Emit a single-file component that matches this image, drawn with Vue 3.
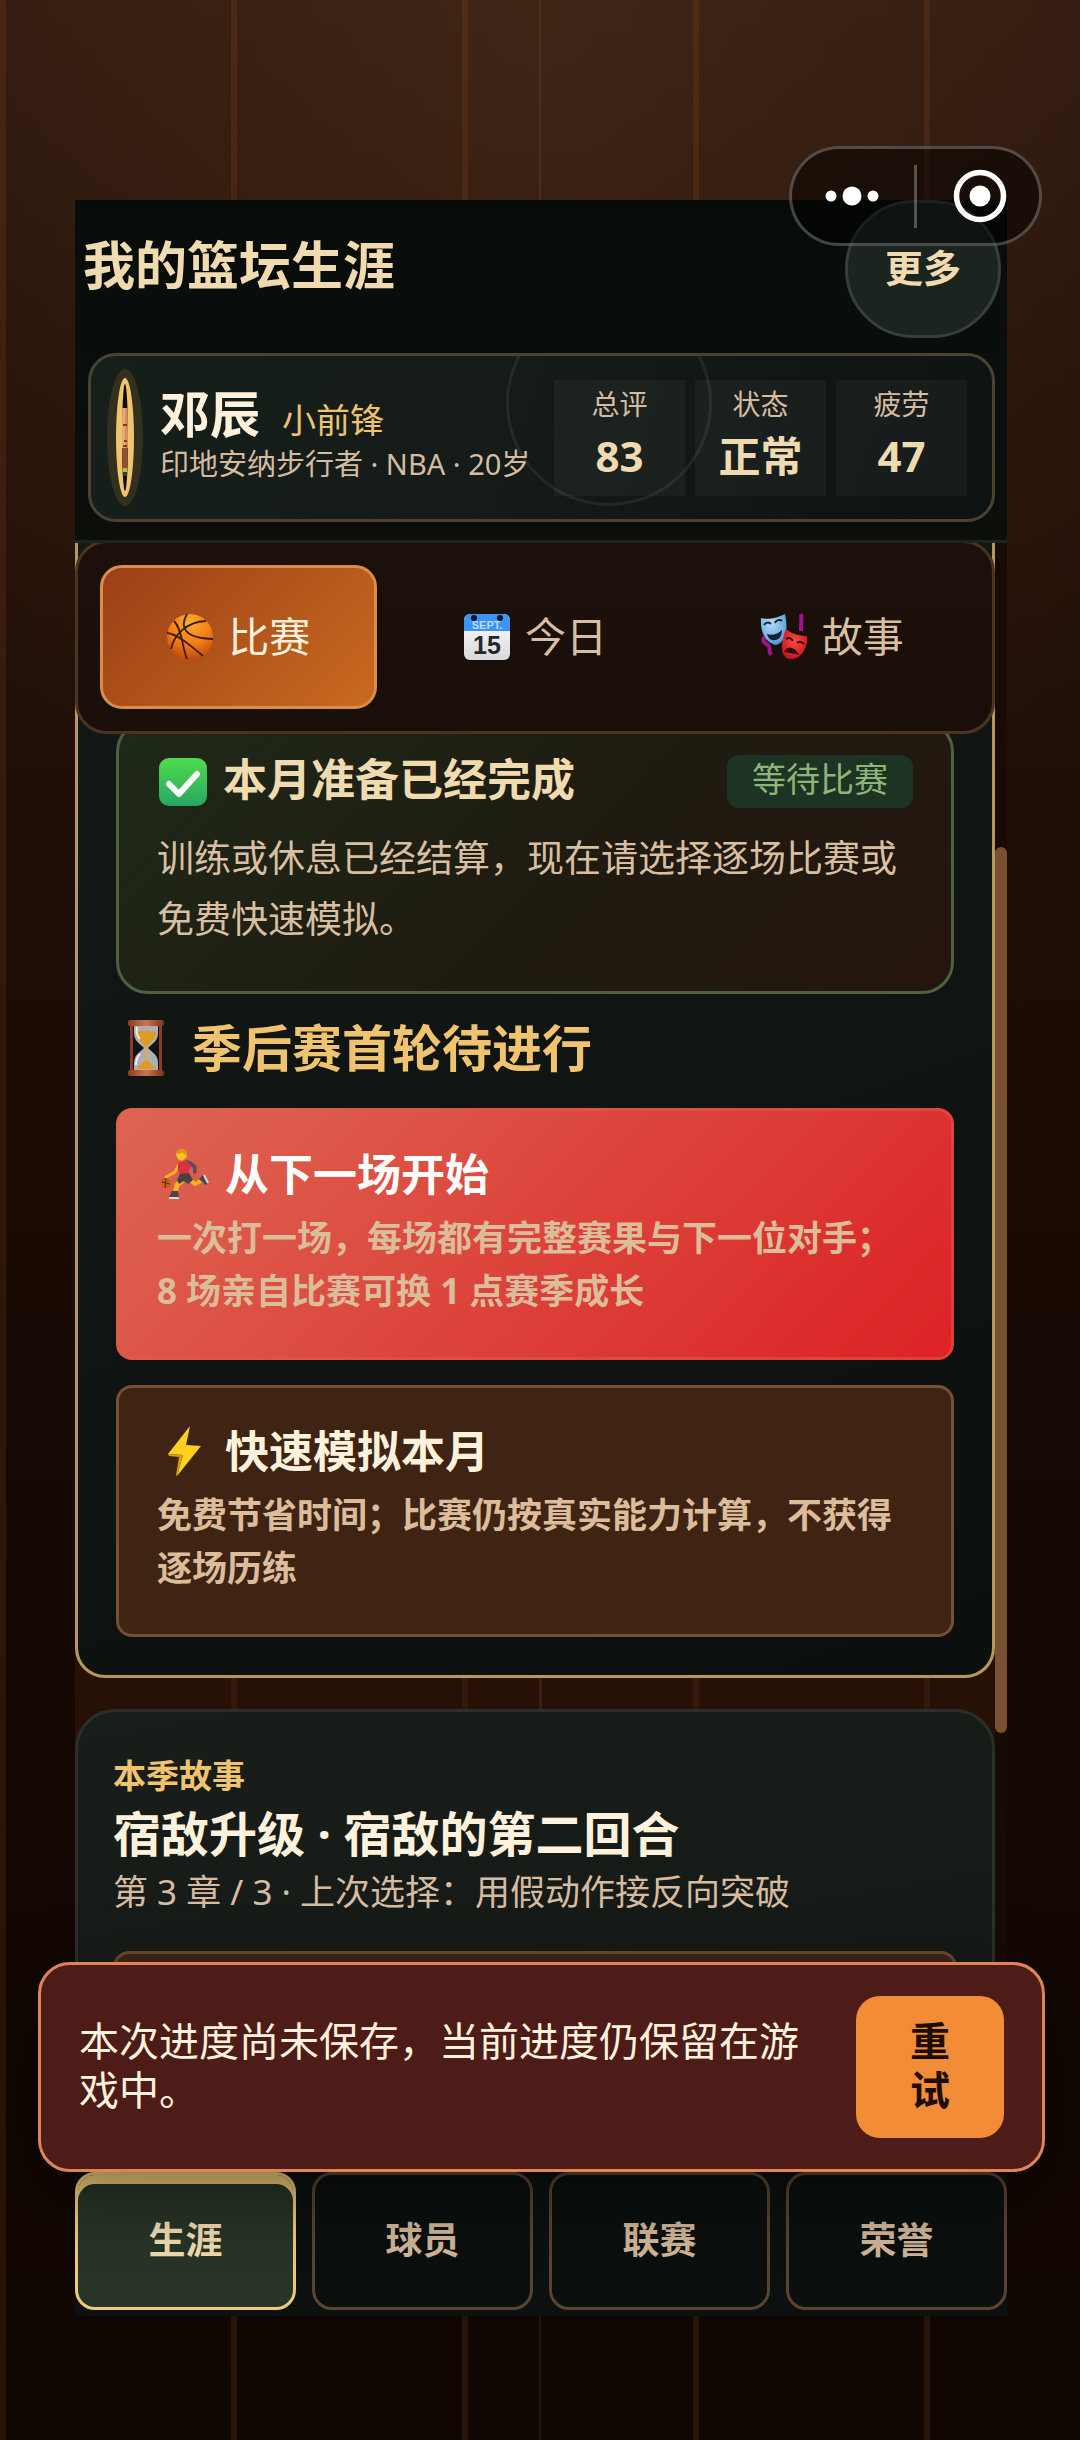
<script setup>
import { ref } from 'vue'

const stats = [
  { label: '总评', value: '83' },
  { label: '状态', value: '正常' },
  { label: '疲劳', value: '47' },
]
const tabs = [
  { id: 'match', label: '比赛' },
  { id: 'today', label: '今日' },
  { id: 'story', label: '故事' },
]
const sections = ['生涯', '球员', '联赛', '荣誉']
const activeTab = ref('match')
const activeSection = ref('生涯')
</script>

<template>
  <div class="page">
    <div class="shell">
      <header class="top">
        <div class="title-row">
          <h1>我的篮坛生涯</h1>
          <button class="more" type="button">更多</button>
        </div>
        <section class="profile">
          <div class="avatar">
            <svg viewBox="0 0 6 107" preserveAspectRatio="none" aria-hidden="true">
              <rect width="6" height="107" fill="#120d0b" />
              <path d="M0 24h6v40H0z" fill="#d98f5c" />
              <path d="M0 24h3v40H0z" fill="#e9a972" />
              <path d="M1 40h4v2H1zM2 56h3v2H2zM1 61h4v2H1z" fill="#7a3d22" />
              <path d="M0 64h6v20H0z" fill="#8d5232" />
              <path d="M1 84h4v4H1z" fill="#d9ab45" />
              <path d="M0 88h6v4H0z" fill="#1d4a2c" />
            </svg>
          </div>
          <div class="who">
            <div class="name-line">
              <h2>邓辰</h2>
              <span class="role">小前锋</span>
            </div>
            <p>印地安纳步行者 · NBA · 20岁</p>
          </div>
          <dl class="stats">
            <div v-for="s in stats" :key="s.label" class="stat">
              <dt>{{ s.label }}</dt>
              <dd>{{ s.value }}</dd>
            </div>
          </dl>
        </section>
      </header>

      <main class="scroller">
        <section class="match-card">
          <nav class="tabs">
            <button
              v-for="t in tabs"
              :key="t.id"
              type="button"
              class="tab"
              :class="{ active: t.id === activeTab }"
              @click="activeTab = t.id"
            >
              <svg v-if="t.id === 'match'" class="emoji" viewBox="0 0 48 48" aria-hidden="true">
                <defs>
                  <radialGradient id="ball" cx=".5" cy=".2" r=".85">
                    <stop offset="0" stop-color="#ffab32" />
                    <stop offset=".55" stop-color="#f07c12" />
                    <stop offset="1" stop-color="#b8420a" />
                  </radialGradient>
                </defs>
                <circle cx="24" cy="24" r="23" fill="url(#ball)" />
                <g fill="none" stroke="#3b1d14" stroke-width="1.8">
                  <path d="M1 20C12 21 26 34 37 43" />
                  <path d="M5 36C8 22 20 9 40 8" />
                  <path d="M8 8c8 8 8 26 13 38" />
                  <path d="M21 1c-8 14-2 24 26 25" />
                </g>
              </svg>
              <svg v-else-if="t.id === 'today'" class="emoji" viewBox="0 0 48 48" aria-hidden="true">
                <defs>
                  <linearGradient id="sheet" x2="0" y2="1">
                    <stop offset="0" stop-color="#ffffff" />
                    <stop offset="1" stop-color="#d9d9dc" />
                  </linearGradient>
                </defs>
                <rect x="1" y="1" width="46" height="46" rx="6" fill="url(#sheet)" />
                <path d="M1 18V7a6 6 0 0 1 6-6h34a6 6 0 0 1 6 6v11z" fill="#3b93f5" />
                <circle cx="11" cy="5" r="3" fill="#10151c" />
                <circle cx="37" cy="5" r="3" fill="#10151c" />
                <text x="24" y="16" text-anchor="middle" class="cal-month">SEPT.</text>
                <text x="24" y="41" text-anchor="middle" class="cal-day">15</text>
              </svg>
              <svg v-else class="emoji" viewBox="0 0 48 48" aria-hidden="true">
                <defs>
                  <radialGradient id="joy" cx=".4" cy=".3" r=".7">
                    <stop offset="0" stop-color="#b5defa" />
                    <stop offset="1" stop-color="#4f9bd6" />
                  </radialGradient>
                  <radialGradient id="sorrow" cx=".5" cy=".4" r=".65">
                    <stop offset="0" stop-color="#ff4b47" />
                    <stop offset="1" stop-color="#bd1119" />
                  </radialGradient>
                </defs>
                <path d="M41 1c1 5 0 9 0 17M5 24c-4 4 0 6 3 8s0 5 3 10" fill="none" stroke="#a3128c" stroke-width="4" />
                <path d="M1 5c8 2 16 0 24-4 3 14 2 28-9 31C5 30 0 18 1 5z" fill="url(#joy)" />
                <path d="M4 12c2-3 5-3 7-1M15 10c1-3 5-4 7-2" fill="none" stroke="#17202c" stroke-width="2" />
                <path d="M7 21c5 2 11 0 15-4 0 6-3 10-7 10-4 1-7-2-8-6z" fill="#17202c" />
                <path d="M26 16c6 5 14 7 21 7 1 12-6 24-17 23-10-1-10-15-4-30z" fill="url(#sorrow)" />
                <path d="M26 26c3-2 5-1 7 2M37 30c2-2 5-1 7 1" fill="none" stroke="#2a0d10" stroke-width="2" />
                <path d="M24 39c2-6 11-6 15 3-5-2-10-2-15-3z" fill="#2a0d10" />
              </svg>
              <span>{{ t.label }}</span>
            </button>
          </nav>

          <article class="status">
            <div class="status-head">
              <svg class="check" viewBox="0 0 48 48" aria-hidden="true">
                <defs>
                  <linearGradient id="tick" x2="0" y2="1">
                    <stop offset="0" stop-color="#4fdc4b" />
                    <stop offset="1" stop-color="#27a663" />
                  </linearGradient>
                </defs>
                <rect width="48" height="48" rx="10" fill="url(#tick)" />
                <path d="M10 26l10 10 18-20" fill="none" stroke="#fff" stroke-width="6" stroke-linecap="round" stroke-linejoin="round" />
              </svg>
              <h3>本月准备已经完成</h3>
              <span class="badge">等待比赛</span>
            </div>
            <p>训练或休息已经结算，现在请选择逐场比赛或免费快速模拟。</p>
          </article>

          <h2 class="round">
            <svg viewBox="0 0 36 56" aria-hidden="true">
              <defs>
                <linearGradient id="wood" x2="1" y2="0">
                  <stop offset="0" stop-color="#8d3d26" />
                  <stop offset=".5" stop-color="#cf7350" />
                  <stop offset="1" stop-color="#7d321e" />
                </linearGradient>
              </defs>
              <path d="M2 5h3v46H2zM31 5h3v46h-3z" fill="#8a3c28" />
              <path d="M6 6h24v7c0 8-6 11-10 15 4 4 10 7 10 15v7H6v-7c0-8 6-11 10-15C12 24 6 21 6 13z" fill="#c9cbcc" opacity=".85" />
              <path d="M8 12q10-3 20 0c0 7-6 10-9 14h-2C14 22 8 19 8 12z" fill="#e09a24" />
              <path d="M17 26h2v16h-2z" fill="#e5a844" />
              <path d="M18 39l10 10H8z" fill="#e09a24" />
              <path d="M9 7c-1 5 0 9 3 12M12 34c-3 3-4 7-4 11" fill="none" stroke="#fff" stroke-width="2" opacity=".8" />
              <rect width="36" height="6" rx="2" fill="url(#wood)" />
              <rect y="50" width="36" height="6" rx="2" fill="url(#wood)" />
            </svg>
            <span>季后赛首轮待进行</span>
          </h2>

          <div class="choices">
            <button class="choice primary" type="button">
              <span class="choice-title">
                <svg viewBox="0 0 48 50" aria-hidden="true">
                  <path d="M17 17l-3 6-9 5" fill="none" stroke="#f5b51d" stroke-width="3" stroke-linecap="round" stroke-linejoin="round" />
                  <path d="M22 31l-6 5-2 8" fill="none" stroke="#f5b51d" stroke-width="5" stroke-linejoin="round" />
                  <path d="M28 30l6 5 6-3" fill="none" stroke="#f5b51d" stroke-width="4" stroke-linejoin="round" />
                  <path d="M24 11c5 0 9 3 12 7l-1 7-3-1v-5l-6-4z" fill="#57505a" />
                  <path d="M17 14l8-3 5 5-3 9-8 1-2-5z" fill="#d83340" />
                  <path d="M19 25l9-1 4 7-5 4-4-3-5 3-2-4z" fill="#4a4148" />
                  <path d="M16 2q5-4 9 0 2 4 0 7l-4 3-4-2-2-4z" fill="#f9c325" />
                  <path d="M16 2q5-4 9 0 1 2 1 5l-4-3-6 1z" fill="#d99a12" />
                  <circle cx="5" cy="34" r="5" fill="#c9601c" />
                  <path d="M1 33l8 2M5 29l-1 10" stroke="#5f260d" stroke-width="1" />
                  <path d="M11 42h6l1 6H8zM38 30l4-4 5 8-2 2z" fill="#4c4650" />
                  <path d="M8 49h10M43 26l4 8" stroke="#ded6de" stroke-width="2" />
                </svg>
                从下一场开始
              </span>
              <span class="choice-desc">一次打一场，每场都有完整赛果与下一位对手；8 场亲自比赛可换 1 点赛季成长</span>
            </button>
            <button class="choice" type="button">
              <span class="choice-title">
                <svg viewBox="0 0 48 50" aria-hidden="true">
                  <path d="M29 0L7 28l15 1-6 21 24-30-15-1z" fill="#ffd21f" />
                  <path d="M7 28l15 1-6 21-1-1 3-18-10-1z" fill="#d99b12" />
                </svg>
                快速模拟本月
              </span>
              <span class="choice-desc">免费节省时间；比赛仍按真实能力计算，不获得逐场历练</span>
            </button>
          </div>
        </section>

        <section class="story-card">
          <p class="eyebrow">本季故事</p>
          <h2>宿敌升级 · 宿敌的第二回合</h2>
          <p class="chapter">第 3 章 / 3 · 上次选择：用假动作接反向突破</p>
          <button class="story-action" type="button" aria-label="故事"></button>
        </section>
        <span class="thumb"></span>
      </main>

      <nav class="bottom">
        <button
          v-for="s in sections"
          :key="s"
          type="button"
          :class="{ active: s === activeSection }"
          @click="activeSection = s"
        >{{ s }}</button>
      </nav>
    </div>

    <div class="capsule">
      <button type="button" aria-label="菜单">
        <svg width="54" height="20" viewBox="0 0 54 20" fill="#fff" aria-hidden="true">
          <circle cx="6" cy="10" r="5.500" /><circle cx="27" cy="10" r="9.500" /><circle cx="48" cy="10" r="5.500" />
        </svg>
      </button>
      <span class="divider"></span>
      <button type="button" aria-label="关闭">
        <svg width="54" height="54" viewBox="0 0 54 54" aria-hidden="true">
          <circle cx="27" cy="27" r="23.500" fill="none" stroke="#fff" stroke-width="5.500" />
          <circle cx="27" cy="27" r="10.500" fill="#fff" />
        </svg>
      </button>
    </div>

    <div class="toast" role="alert">
      <p>本次进度尚未保存，当前进度仍保留在游戏中。</p>
      <button type="button">重试</button>
    </div>
  </div>
</template>

<style>
body {
  background: #120702;
}
</style>

<style scoped>
* {
  box-sizing: border-box;
  margin: 0;
  padding: 0;
}
button {
  font: inherit;
  color: inherit;
  border: 0;
  background: none;
  cursor: pointer;
}
.page {
  position: relative;
  height: 100vh;
  padding: 200px 73px 124px 75px;
  overflow: hidden;
  font-family: "Noto Sans", "Noto Sans CJK SC", sans-serif;
  color: #fff2dc;
  background:
    linear-gradient(90deg, transparent calc(50% - 1px), rgba(255, 220, 180, 0.07) calc(50% - 1px) calc(50% + 1px), transparent calc(50% + 1px)),
    repeating-linear-gradient(90deg, rgba(160, 84, 34, 0.17) 0 6px, transparent 6px 231px),
    radial-gradient(ellipse 70% 40% at 50% 0, rgba(84, 52, 27, 0.42), transparent),
    linear-gradient(180deg, #301a0f 0, #28140b 15%, #200e06 32%, #180a04 55%, #120702 80%, #100602 100%);
}
.shell {
  display: flex;
  flex-direction: column;
  height: 100%;
}

/* header */
.top {
  flex: none;
  padding-bottom: 18px;
  border-bottom: 3px solid #1d2322;
  background: linear-gradient(180deg, #080c09, #090e0d 30%, #0c0e0a);
}
.title-row {
  display: flex;
  align-items: center;
  justify-content: space-between;
  padding: 0 6px 0 8px;
}
h1 {
  padding-bottom: 8px;
  font-size: 52px;
  line-height: 60px;
  color: #f0dbb0;
}
.more {
  width: 156px;
  height: 138px;
  padding-bottom: 8px;
  border: 3px solid #363f3c;
  border-radius: 69px;
  background: #1c2420;
  color: #f0dbb0;
  font-size: 38px;
  font-weight: 700;
}
.profile {
  position: relative;
  display: flex;
  align-items: center;
  margin: 15px 12px 0 13px;
  padding: 22px 25px;
  border: 3px solid #4a432f;
  border-radius: 28px;
  overflow: hidden;
  background: linear-gradient(110deg, #171f1b, #141b18 45%, #0d1212);
}
.profile::before {
  content: "";
  position: absolute;
  left: 415px;
  top: -56px;
  width: 200px;
  height: 200px;
  border: 3px solid rgba(255, 255, 255, 0.07);
  border-radius: 50%;
}
.avatar {
  flex: none;
  width: 18px;
  height: 119px;
  border: 6px solid #f0c46e;
  border-radius: 50%;
  overflow: hidden;
  box-shadow: 0 0 0 9px #33301f;
  background: #f0c46e;
}
.avatar svg {
  display: block;
  width: 100%;
  height: 100%;
}
.who {
  flex: 1;
  min-width: 0;
  margin-left: 26px;
  padding-bottom: 6px;
  white-space: nowrap;
}
.name-line {
  display: flex;
  align-items: baseline;
  gap: 22px;
}
.name-line h2 {
  font-size: 50px;
  line-height: 56px;
}
.role {
  font-size: 34px;
  line-height: 40px;
  color: #f0c46e;
}
.who p {
  margin-top: 2px;
  font-size: 29px;
  line-height: 40px;
  color: #d5bca1;
}
.stats {
  display: flex;
  gap: 10px;
}
.stat {
  width: 131px;
  height: 116px;
  padding-top: 4px;
  background: rgba(255, 255, 255, 0.04);
  text-align: center;
}
.stat dt {
  font-size: 28px;
  line-height: 40px;
  color: #d5bca1;
}
.stat dd {
  font-size: 42px;
  line-height: 64px;
  font-weight: 700;
  color: #f0dbb0;
}

/* scrolling area */
.scroller {
  position: relative;
  flex: 1;
  min-height: 0;
  padding-right: 12px;
  overflow: hidden;
  background:
    linear-gradient(90deg, transparent calc(50% - 2px), rgba(255, 220, 180, 0.08) calc(50% - 2px) calc(50% + 1px), transparent calc(50% + 1px)),
    repeating-linear-gradient(90deg, transparent 0 156px, #35190d 156px 162px, transparent 162px 231px),
    #271106;
}
.scroller::after {
  content: "";
  position: absolute;
  inset: 0 0 0 auto;
  width: 12px;
  background: #180a04;
}
.thumb {
  position: absolute;
  right: 0;
  top: 304px;
  z-index: 1;
  width: 12px;
  height: 886px;
  border-radius: 6px;
  background: #785132;
}
.match-card {
  padding: 0 38px 38px;
  border: 3px solid #b8975a;
  border-top: 0;
  border-radius: 0 0 30px 30px;
  background: linear-gradient(160deg, #121a16, #101412 50%, #0b0f0e);
}
.tabs {
  position: relative;
  z-index: 1;
  display: flex;
  gap: 20px;
  margin: -3px -41px 0;
  padding: 22px;
  border: 3px solid #4a3320;
  border-radius: 32px;
  background: linear-gradient(180deg, #1c100a, #190e09);
}
.tab {
  flex: 1;
  display: flex;
  align-items: center;
  justify-content: center;
  gap: 14px;
  height: 144px;
  border: 3px solid transparent;
  border-radius: 22px;
  font-size: 41px;
  color: #d9bfa2;
}
.tab span {
  padding-bottom: 6px;
}
.tab.active {
  color: #fff2dc;
  border-color: #d88d48;
  background: linear-gradient(135deg, #9b3f16, #c96b20) border-box;
}
.emoji {
  width: 48px;
  height: 48px;
}
.cal-month {
  font: 700 11px "Liberation Sans", sans-serif;
  fill: #b9dcff;
}
.cal-day {
  font: 700 25px "Liberation Sans", sans-serif;
  fill: #26282c;
}
.status {
  margin-top: -14px;
  padding: 32px 38px 42px;
  border: 3px solid #4d6040;
  border-radius: 32px;
  background: linear-gradient(135deg, #1e2919, #1f1c11 50%, #24150e);
}
.status-head {
  display: flex;
  align-items: center;
  padding-left: 2px;
}
.check {
  width: 48px;
  height: 48px;
}
h3 {
  flex: 1;
  margin-left: 16px;
  padding-bottom: 4px;
  font-size: 44px;
  line-height: 49px;
  color: #f0dbb0;
}
.badge {
  padding: 0 25px 4px;
  border-radius: 12px;
  background: #1d3323;
  color: #8cb578;
  font-size: 34px;
  line-height: 49px;
}
.status p {
  margin-top: 19px;
  font-size: 37px;
  line-height: 61px;
  color: #d9bfa2;
}
.round {
  display: flex;
  align-items: center;
  gap: 28px;
  margin: 24px 0 30px;
  padding-left: 12px;
  font-size: 50px;
  line-height: 60px;
  color: #f0c46e;
}
.round svg {
  width: 36px;
  height: 56px;
}
.choices {
  display: flex;
  flex-direction: column;
  gap: 25px;
}
.choice {
  display: flex;
  flex-direction: column;
  gap: 12px;
  padding: 38px 48px 40px 38px;
  border: 3px solid #755034;
  border-radius: 16px;
  background: #3f2414;
  font-weight: 700;
  text-align: left;
}
.choice.primary {
  border-color: rgba(228, 90, 80, 0.5);
  background: linear-gradient(135deg, #dd6653, #dc2224) border-box;
}
.choice-title {
  display: flex;
  align-items: center;
  gap: 16px;
  padding-left: 4px;
  font-size: 44px;
  line-height: 50px;
  color: #fff2dc;
}
.primary .choice-title {
  color: #fff;
}
.choice-title svg {
  width: 48px;
  height: 50px;
}
.choice-desc {
  font-size: 35px;
  line-height: 53px;
  color: #dbbc9b;
}

/* story */
.story-card {
  margin-top: 31px;
  padding: 42px 35px 36px;
  border: 3px solid #2a2f2b;
  border-radius: 40px;
  background: linear-gradient(170deg, #1a1e1a, #141814);
}
.eyebrow {
  font-size: 33px;
  line-height: 44px;
  font-weight: 700;
  color: #f0c46e;
}
.story-card h2 {
  font-size: 48px;
  line-height: 72px;
}
.chapter {
  font-size: 35px;
  line-height: 44px;
  color: #d5bca1;
}
.story-action {
  display: block;
  width: 100%;
  height: 120px;
  margin-top: 37px;
  border: 3px solid #6b4a30;
  border-radius: 16px;
  background: #3f2414;
}

/* bottom navigation */
.bottom {
  flex: none;
  display: flex;
  gap: 16px;
  padding: 16px 0 6px;
  background: #0c110f;
}
.bottom button {
  flex: 1;
  height: 138px;
  padding-bottom: 6px;
  border: 3px solid #5c432f;
  border-radius: 20px;
  background: #0b100e;
  font-size: 37px;
  font-weight: 700;
  color: #d0b698;
}
.bottom .active {
  border-color: #ecca79;
  background: #283427;
  box-shadow: inset 0 9px 0 #ecca79;
  color: #f0dbb0;
}

/* system capsule */
.capsule {
  position: absolute;
  top: 146px;
  right: 38px;
  display: flex;
  align-items: center;
  gap: 3px;
  width: 253px;
  height: 100px;
  border: 3px solid rgba(255, 255, 255, 0.25);
  border-radius: 50px;
  background: rgba(0, 0, 0, 0.5);
}
.capsule button {
  flex: 1;
  display: grid;
  place-items: center;
}
.divider {
  width: 3px;
  height: 63px;
  background: rgba(255, 255, 255, 0.28);
}

/* save warning */
.toast {
  position: absolute;
  left: 38px;
  right: 35px;
  bottom: 268px;
  z-index: 2;
  display: flex;
  align-items: center;
  gap: 40px;
  padding: 31px 38px;
  border: 3px solid #e08457;
  border-radius: 32px;
  background: #4d1b18;
  box-shadow: 0 24px 72px rgba(0, 0, 0, 0.45);
}
.toast p {
  flex: 1;
  padding-bottom: 4px;
  font-size: 40px;
  line-height: 49px;
}
.toast button {
  flex: none;
  width: 148px;
  height: 142px;
  padding: 0 52px 4px;
  border-radius: 24px;
  background: #f28c36;
  color: #1d0d06;
  font-size: 40px;
  line-height: 49px;
  font-weight: 700;
}
</style>
